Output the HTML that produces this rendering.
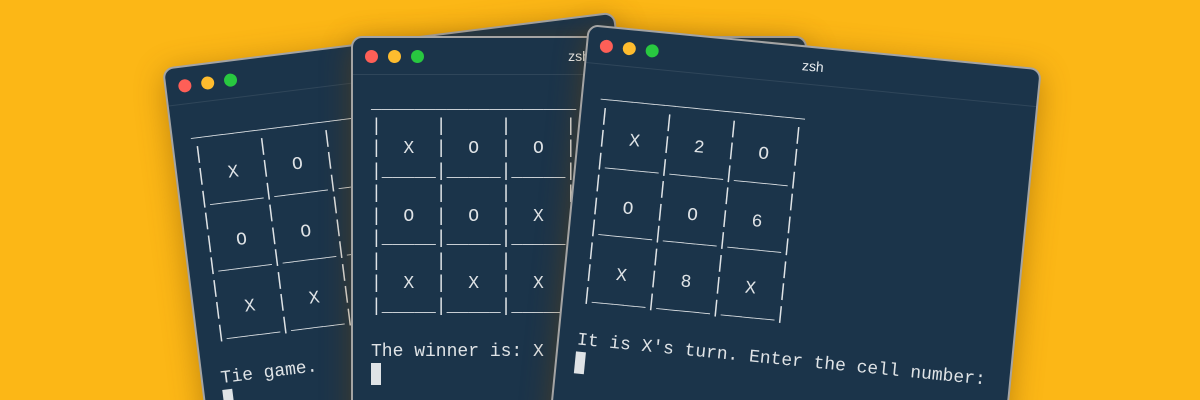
<!DOCTYPE html>
<html><head><meta charset="utf-8"><style>
html,body{margin:0;padding:0;width:1200px;height:400px;overflow:hidden;}
body{background:#FCB716;}
#stage{position:relative;width:1200px;height:400px;overflow:hidden;background:#FCB716;}
.win{position:absolute;width:452px;height:460px;background:#1B344A;border:2px solid #a4a4a4;border-radius:11px;transform-origin:0 0;box-shadow:0 6px 30px rgba(120,70,0,0.45);overflow:hidden;}
.bar{height:36px;border-bottom:1px solid rgba(255,255,255,0.09);position:relative;}
.dot{position:absolute;top:12px;width:13px;height:13px;border-radius:50%;}
.r{left:12px;background:#FE5F57;}.y{left:35px;background:#FEBC2E;}.g{left:58px;background:#28C840;}
.title{position:absolute;left:0;right:0;top:10px;text-align:center;color:#e8ecef;font:14px "Liberation Sans",sans-serif;}
pre{margin:0;position:absolute;left:18px;top:55px;font:18px/22.5px "Liberation Mono","DejaVu Sans Mono",monospace;color:#dfe3e6;}
.cur{display:inline-block;width:10px;height:22px;background:#dfe3e6;vertical-align:-5px;}
</style></head><body><div id="stage">
<div class="win" style="left:162px;top:68px;transform:rotate(-7.1deg);">
<div class="bar"><div class="dot r"></div><div class="dot y"></div><div class="dot g"></div><div class="title">zsh</div></div>
<pre>___________________
|     |     |     |
|  X  |  O  |  X  |
|_____|_____|_____|
|     |     |     |
|  O  |  O  |  X  |
|_____|_____|_____|
|     |     |     |
|  X  |  X  |  O  |
|_____|_____|_____|

Tie game.
<span class="cur"></span></pre>
</div>
<div class="win" style="left:351px;top:36px;">
<div class="bar"><div class="dot r"></div><div class="dot y"></div><div class="dot g"></div><div class="title">zsh</div></div>
<pre>___________________
|     |     |     |
|  X  |  O  |  O  |
|_____|_____|_____|
|     |     |     |
|  O  |  O  |  X  |
|_____|_____|_____|
|     |     |     |
|  X  |  X  |  X  |
|_____|_____|_____|

The winner is: X
<span class="cur"></span></pre>
</div>
<div class="win" style="left:588px;top:24px;transform:rotate(5.6deg);">
<div class="bar"><div class="dot r"></div><div class="dot y"></div><div class="dot g"></div><div class="title">zsh</div></div>
<pre>___________________
|     |     |     |
|  X  |  2  |  O  |
|_____|_____|_____|
|     |     |     |
|  O  |  O  |  6  |
|_____|_____|_____|
|     |     |     |
|  X  |  8  |  X  |
|_____|_____|_____|

It is X's turn. Enter the cell number:
<span class="cur"></span></pre>
</div>
</div></body></html>
